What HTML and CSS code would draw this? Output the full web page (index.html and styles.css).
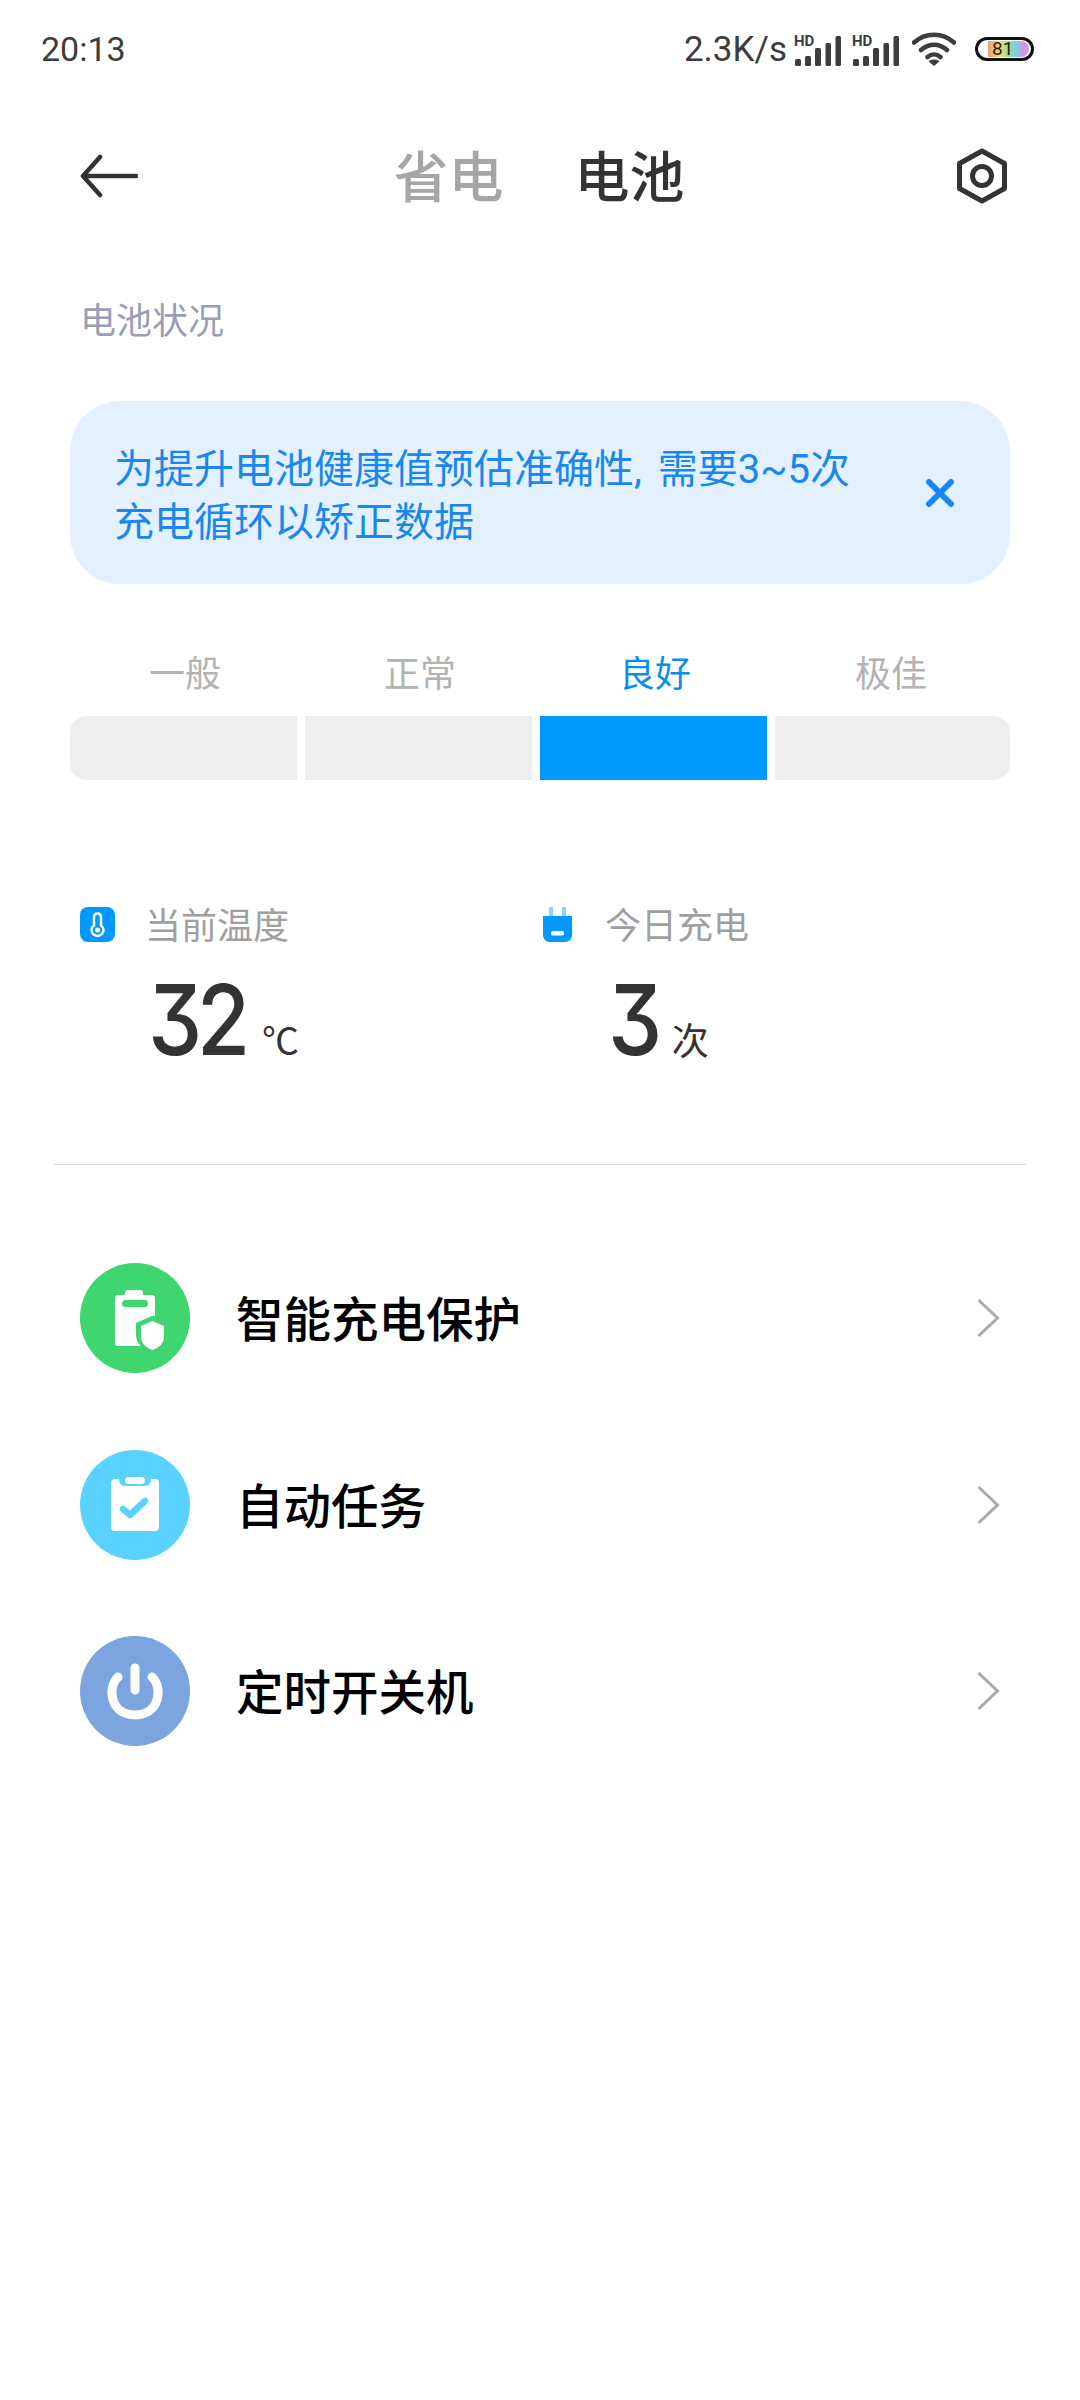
FILE: index.html
```html
<!DOCTYPE html>
<html lang="zh-CN">
<head>
    <meta charset="UTF-8">
    <meta name="viewport" content="width=device-width, initial-scale=1.0">
    <title>电池</title>
    <link rel="stylesheet" href="styles.css">
</head>
<body>
    <div class="status-bar">
        <span class="status-time">20:13</span>
        <div class="status-right">
            <span class="status-speed">2.3K/s</span>
            <svg class="signal" width="48" height="34" viewBox="0 -4 48 34">
                <text x="0" y="10" class="signal-hd">HD</text>
                <rect x="1" y="23" width="6" height="7" rx="1.5"/><rect x="11" y="20" width="6" height="10" rx="1.5"/><rect x="21" y="12" width="6" height="18" rx="1.5"/><rect x="31.500" y="7" width="5.500" height="23" rx="1.500"/><rect x="41.500" y="0" width="5.500" height="30" rx="1.500"/>
            </svg>
            <svg class="signal" width="48" height="34" viewBox="0 -4 48 34">
                <text x="0" y="10" class="signal-hd">HD</text>
                <rect x="1" y="23" width="6" height="7" rx="1.5"/><rect x="11" y="20" width="6" height="10" rx="1.5"/><rect x="21" y="12" width="6" height="18" rx="1.5"/><rect x="31.500" y="7" width="5.500" height="23" rx="1.500"/><rect x="41.500" y="0" width="5.500" height="30" rx="1.500"/>
            </svg>
            <svg class="wifi" width="44" height="34" viewBox="0 0 44 34">
                <path d="M2 10.500C13.500 0 30.500 0 42 10.500M9 18C17 11 27 11 35 18M15.500 25C19.500 21.500 24.500 21.500 28.500 25" fill="none" stroke="#3d3d3d" stroke-width="4.500" stroke-linecap="round"/>
                <path d="M22 34L16.500 29.300C19.500 27 24.500 27 27.500 29.300Z" fill="#3d3d3d"/>
            </svg>
            <div class="battery">
                <div class="battery-fill"><span>81</span></div>
            </div>
        </div>
    </div>

    <div class="nav">
        <svg width="58" height="44" viewBox="0 0 58 44">
            <path d="M20 3L3 22L20 41M3 22H56" fill="none" stroke="#333" stroke-width="4.500" stroke-linecap="round" stroke-linejoin="round"/>
        </svg>
        <div class="tabs">
            <span class="tab">省电</span>
            <span class="tab tab-active">电池</span>
        </div>
        <svg width="52" height="56" viewBox="0 0 52 56">
            <path d="M26 3L48.500 15.500V40.500L26 53L3.500 40.500V15.500Z" fill="none" stroke="#333" stroke-width="5" stroke-linejoin="round"/>
            <circle cx="26" cy="28" r="9.500" fill="none" stroke="#333" stroke-width="5"/>
        </svg>
    </div>

    <h2 class="section-title">电池状况</h2>

    <div class="banner">
        <p class="banner-text">为提升电池健康值预估准确性, 需要3~5次<br>充电循环以矫正数据</p>
        <svg class="banner-close" width="30" height="30" viewBox="0 0 30 30">
            <path d="M4 4L26 26M26 4L4 26" fill="none" stroke="#1a86f0" stroke-width="6" stroke-linecap="round"/>
        </svg>
    </div>

    <div class="levels">
        <span class="level-name">一般</span>
        <span class="level-name">正常</span>
        <span class="level-name level-current">良好</span>
        <span class="level-name level-best">极佳</span>
        <div class="level-bar level-first"></div>
        <div class="level-bar"></div>
        <div class="level-bar level-on"></div>
        <div class="level-bar level-last"></div>
    </div>

    <div class="stats">
        <div class="stat">
            <div class="stat-head">
                <div class="stat-icon">
                    <svg width="35" height="35" viewBox="0 0 35 35">
                        <rect width="35" height="35" rx="8" fill="#0099ff"/>
                        <path d="M17.500 6.500C15.200 6.500 14 8 14 10V18.500C12.300 19.700 11.500 21.300 11.500 23C11.500 26.300 14.200 29 17.500 29C20.800 29 23.500 26.300 23.500 23C23.500 21.300 22.700 19.700 21 18.500V10C21 8 19.800 6.500 17.500 6.500Z" fill="none" stroke="#fff" stroke-width="2.500"/>
                        <circle cx="17.500" cy="23" r="2.500" fill="#fff"/>
                    </svg>
                </div>
                <span class="stat-label">当前温度</span>
            </div>
            <div class="stat-value"><span class="stat-num">32</span><span class="stat-unit">℃</span></div>
        </div>
        <div class="stat">
            <div class="stat-head">
                <div class="stat-icon">
                    <svg width="29" height="35" viewBox="0 0 29 35">
                        <path d="M6 0H10V9H6ZM19 0H23V9H19Z" fill="#8fd3ff"/>
                        <path d="M0 9H29V28C29 32 26 35 22 35H7C3 35 0 32 0 28Z" fill="#0099ff"/>
                        <rect x="8" y="24" width="13" height="4.500" rx="1.500" fill="#fff"/>
                    </svg>
                </div>
                <span class="stat-label">今日充电</span>
            </div>
            <div class="stat-value"><span class="stat-num">3</span><span class="stat-unit stat-unit-count">次</span></div>
        </div>
    </div>

    <div class="divider"></div>

    <div class="menu">
        <div class="menu-row">
            <svg class="menu-icon" width="110" height="110" viewBox="0 0 110 110">
                <circle cx="55" cy="55" r="55" fill="#3fd56f"/>
                <path d="M45 32V30C45 28 46 27 48 27H60C62 27 63 28 63 30V32H72C74 32 75 33 75 35V83H38C36 83 35 82 35 80V35C35 33 36 32 38 32Z" fill="#fff"/>
                <rect x="42" y="37" width="26" height="7" rx="3.500" fill="#3fd56f"/>
                <path d="M72 53L56 60V72C56 80 63 87 72 91H88V53Z" fill="#3fd56f"/>
                <path d="M72.500 58L84 63V74C84 80 79 85 72.500 87C66 85 61 80 61 74V63Z" fill="#fff"/>
            </svg>
            <span class="menu-text">智能充电保护</span>
            <svg class="chevron" width="24" height="40" viewBox="0 0 24 40">
                <path d="M2.500 2L21.500 20L2.500 38" fill="none" stroke="#aaa" stroke-width="3"/>
            </svg>
        </div>
        <div class="menu-row">
            <svg class="menu-icon" width="110" height="110" viewBox="0 0 110 110">
                <circle cx="55" cy="55" r="55" fill="#5ad2ff"/>
                <rect x="31" y="29" width="48" height="52" rx="4" fill="#fff"/>
                <rect x="39" y="24" width="32" height="12" rx="6" fill="#5ad2ff"/>
                <rect x="45" y="27" width="20" height="7" rx="3.500" fill="#fff"/>
                <path d="M43 59L50 65L65 51" fill="none" stroke="#5ad2ff" stroke-width="6.500" stroke-linecap="round" stroke-linejoin="round"/>
            </svg>
            <span class="menu-text">自动任务</span>
            <svg class="chevron" width="24" height="40" viewBox="0 0 24 40">
                <path d="M2.500 2L21.500 20L2.500 38" fill="none" stroke="#aaa" stroke-width="3"/>
            </svg>
        </div>
        <div class="menu-row">
            <svg class="menu-icon" width="110" height="110" viewBox="0 0 110 110">
                <circle cx="55" cy="55" r="55" fill="#7ca5e0"/>
                <path d="M38 41C27 51 30 79 55 79C80 79 83 51 72 41M55 32V54" fill="none" stroke="#fff" stroke-width="9" stroke-linecap="round"/>
            </svg>
            <span class="menu-text">定时开关机</span>
            <svg class="chevron" width="24" height="40" viewBox="0 0 24 40">
                <path d="M2.500 2L21.500 20L2.500 38" fill="none" stroke="#aaa" stroke-width="3"/>
            </svg>
        </div>
    </div>
</body>
</html>
```

FILE: styles.css
```css
* {
    box-sizing: border-box;
}
body {
    margin: 0;
    width: 1080px;
    height: 2400px;
    background-color: #fff;
    color: #333;
    font-family: Roboto, "Noto Sans CJK SC", sans-serif;
    overflow: hidden;
}

/* status bar */
.status-bar {
    height: 98px;
    padding: 0 46px 0 41px;
    display: flex;
    align-items: center;
    justify-content: space-between;
    color: #3d3d3d;
}
.status-time {
    font-size: 34px;
}
.status-right {
    display: flex;
    align-items: center;
}
.status-speed {
    margin-right: 7px;
    font-size: 35px;
}
.signal {
    margin-right: 10px;
    fill: #3d3d3d;
}
.signal-hd {
    font-family: Roboto, sans-serif;
    font-size: 15px;
    font-weight: 700;
}
.wifi {
    margin: 0 19px 0 2px;
}
.battery {
    width: 59px;
    height: 24px;
    padding: 1px 2px;
    border: 3px solid #111;
    border-radius: 12px;
}
.battery-fill {
    height: 100%;
    margin-left: 8px;
    padding-left: 4px;
    border-radius: 0 8px 8px 0;
    background: linear-gradient(90deg, #f0a070, #f3dc7a 30%, #9adf9a 50%, #7cd0e6 68%, #cf9be0 85%);
    color: #222;
    font-size: 19px;
    line-height: 16px;
}

/* title row */
.nav {
    height: 156px;
    padding: 0 72px 0 80px;
    display: flex;
    align-items: center;
    justify-content: space-between;
}
.tabs {
    display: flex;
    gap: 71px;
    margin: -7px 16px 0 0;
}
.tab {
    font-size: 55px;
    font-weight: 500;
    color: #a6a6a6;
}
.tab-active {
    color: #333;
}

.section-title {
    margin: 43px 0 0 80px;
    font-size: 36px;
    font-weight: 400;
    line-height: 50px;
    color: #9a9db5;
}

/* banner */
.banner {
    height: 183px;
    margin: 54px 70px 0;
    padding: 0 45px 0 44px;
    display: flex;
    align-items: center;
    justify-content: space-between;
    background-color: #e3f0ff;
    border-radius: 50px;
}
.banner-text {
    margin: 6px 0 0;
    font-size: 40px;
    line-height: 53px;
    word-spacing: 6px;
    color: #1a86f0;
}
.banner-close {
    margin-right: 10px;
}

/* level scale */
.levels {
    margin: 66px 70px 0;
    display: grid;
    grid-template-columns: 227px 227px 227px 235px;
    column-gap: 8px;
    row-gap: 16px;
}
.level-name {
    padding-left: 3px;
    font-size: 36px;
    line-height: 50px;
    text-align: center;
    color: #b3b3b3;
}
.level-best {
    padding: 0 3px 0 0;
}
.level-current {
    color: #0a8eea;
}
.level-bar {
    height: 64px;
    background-color: #eee;
}
.level-first {
    border-radius: 16px 0 0 16px;
}
.level-last {
    border-radius: 0 16px 16px 0;
}
.level-on {
    background-color: #0099ff;
}

/* temperature and charge count */
.stats {
    margin: 127px 0 0 80px;
    display: grid;
    grid-template-columns: 460px 460px;
}
.stat-head {
    display: flex;
    align-items: center;
    gap: 30px;
    height: 35px;
}
.stat-icon {
    width: 35px;
    height: 35px;
    display: flex;
    justify-content: center;
}
.stat-label {
    margin-top: -3px;
    font-size: 36px;
    color: #a0a0a0;
}
.stat-value {
    height: 138px;
    padding-left: 68px;
    display: flex;
    align-items: baseline;
}
/* digits are narrower than any installed font */
.stat-num {
    font-family: Inter, Roboto, sans-serif;
    font-feature-settings: "cv09";
    font-size: 98px;
    font-weight: 500;
    letter-spacing: -6px;
    line-height: 156px;
    color: #333;
    transform: scaleX(0.88);
    transform-origin: left;
}
.stat-unit {
    margin-left: 4px;
    font-size: 37px;
    color: #333;
}
.stat-unit-count {
    margin-left: 8px;
}

.divider {
    height: 1px;
    margin: 84px 54px 0;
    background-color: #ddd;
}

/* menu */
.menu {
    margin-top: 98px;
    padding: 0 80px;
    display: flex;
    flex-direction: column;
    gap: 76.5px;
}
.menu-row {
    height: 110px;
    display: flex;
    align-items: center;
}
.menu-text {
    margin: -3px 0 0 46px;
    flex: 1;
    font-size: 47.5px;
    font-weight: 500;
    color: #000;
}
```
